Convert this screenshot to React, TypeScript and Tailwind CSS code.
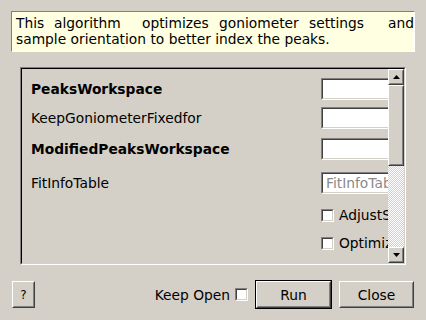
import React from "react";

const FONT = "font-['DejaVu_Sans','Liberation_Sans',sans-serif]";

function Raised({ className = "", children }: { className?: string; children?: React.ReactNode }) {
  return (
    <div
      className={`border border-t-white border-l-white border-b-[#404040] border-r-[#404040] bg-[#d4d0c8] ${className}`}
    >
      <div className="w-full h-full border border-t-[#d4d0c8] border-l-[#d4d0c8] border-b-[#808080] border-r-[#808080] flex items-center justify-center">
        {children}
      </div>
    </div>
  );
}

function Sunken({ className = "", children }: { className?: string; children?: React.ReactNode }) {
  return (
    <div className={`border border-t-[#808080] border-l-[#808080] border-b-white border-r-white ${className}`}>
      <div className="w-full h-full border border-t-[#404040] border-l-[#404040] border-b-[#d4d0c8] border-r-[#d4d0c8] bg-white flex items-center">
        {children}
      </div>
    </div>
  );
}

function Row({ mt, label, bold, children }: { mt: string; label?: string; bold?: boolean; children: React.ReactNode }) {
  return (
    <div className={`flex items-center h-[22px] shrink-0 ${mt}`}>
      <div className={`w-[299px] shrink-0 pl-[9px] whitespace-nowrap ${bold ? "font-bold" : ""}`}>{label}</div>
      {children}
    </div>
  );
}

function Check({ label }: { label: string }) {
  return (
    <div className="flex items-center shrink-0 whitespace-nowrap">
      <Sunken className="w-[13px] h-[13px] shrink-0" />
      <span className="ml-[5px]">{label}</span>
    </div>
  );
}

export default function App() {
  return (
    <div className={`w-[426px] h-[320px] bg-[#d4d0c8] text-[13.8px] leading-[16px] text-black overflow-hidden ${FONT}`}>
      {/* info box */}
      <div className="ml-[11px] mt-[11px] w-[404px] h-[41px] bg-[#ffffe1] border border-t-[#808080] border-l-[#808080] border-b-white border-r-white pl-[4px] pt-[3px]">
        <div className="flex whitespace-nowrap">
          <span className="w-[38px] shrink-0">This</span>
          <span className="w-[88px] shrink-0">algorithm</span>
          <span className="w-[77px] shrink-0">optimizes</span>
          <span className="w-[90px] shrink-0">goniometer</span>
          <span className="w-[79px] shrink-0">settings</span>
          <span>and</span>
        </div>
        <div className="whitespace-nowrap">sample orientation to better index the peaks.</div>
      </div>

      {/* property panel */}
      <div className="ml-[20px] mt-[15px] w-[386px] h-[198px] border border-t-[#808080] border-l-[#808080] border-b-white border-r-white">
        <div className="w-full h-full border border-t-[#000] border-l-[#000] border-b-[#d4d0c8] border-r-[#d4d0c8] flex">
          <div className="w-[366px] h-full overflow-hidden flex flex-col">
            <Row mt="mt-[9px]" label="PeaksWorkspace" bold>
              <Sunken className="w-[100px] h-[22px] shrink-0" />
            </Row>
            <Row mt="mt-[7px]" label="KeepGoniometerFixedfor">
              <Sunken className="w-[100px] h-[22px] shrink-0" />
            </Row>
            <Row mt="mt-[9px]" label="ModifiedPeaksWorkspace" bold>
              <Sunken className="w-[100px] h-[22px] shrink-0" />
            </Row>
            <Row mt="mt-[12px]" label="FitInfoTable">
              <Sunken className="w-[100px] h-[22px] shrink-0">
                <span className="pl-[3px] text-[#8a8a8a] whitespace-nowrap">FitInfoTable</span>
              </Sunken>
            </Row>
            <Row mt="mt-[10px]">
              <Check label="AdjustSampleOffsets" />
            </Row>
            <Row mt="mt-[6px]">
              <Check label="OptimizeGoniometerTilt" />
            </Row>
          </div>
          {/* scrollbar */}
          <div className="w-[16px] h-full flex flex-col shrink-0">
            <Raised className="h-[16px] shrink-0">
              <svg width="7" height="4" viewBox="0 0 7 4">
                <polygon points="3.5,0 7,4 0,4" fill="#000" />
              </svg>
            </Raised>
            <Raised className="h-[81px] shrink-0" />
            <div className="flex-1 [background:repeating-conic-gradient(#d4d0c8_0%_25%,#ffffff_0%_50%)_0_0/2px_2px]" />
            <Raised className="h-[16px] shrink-0">
              <svg width="7" height="4" viewBox="0 0 7 4">
                <polygon points="0,0 7,0 3.5,4" fill="#000" />
              </svg>
            </Raised>
          </div>
        </div>
      </div>

      {/* bottom bar */}
      <div className="ml-[12px] mt-[15px] w-[402px] h-[29px] flex items-center">
        <Raised className="w-[23px] h-[27px] shrink-0">
          <span className="text-[12px]">?</span>
        </Raised>
        <div className="flex-1" />
        <span className="whitespace-nowrap">Keep Open</span>
        <Sunken className="w-[13px] h-[13px] ml-[5px] shrink-0" />
        <div className="ml-[7px] w-[77px] h-[29px] border border-black shrink-0">
          <Raised className="w-full h-full">
            <span>Run</span>
          </Raised>
        </div>
        <Raised className="ml-[7px] w-[75px] h-[27px] shrink-0">
          <span>Close</span>
        </Raised>
      </div>
    </div>
  );
}
